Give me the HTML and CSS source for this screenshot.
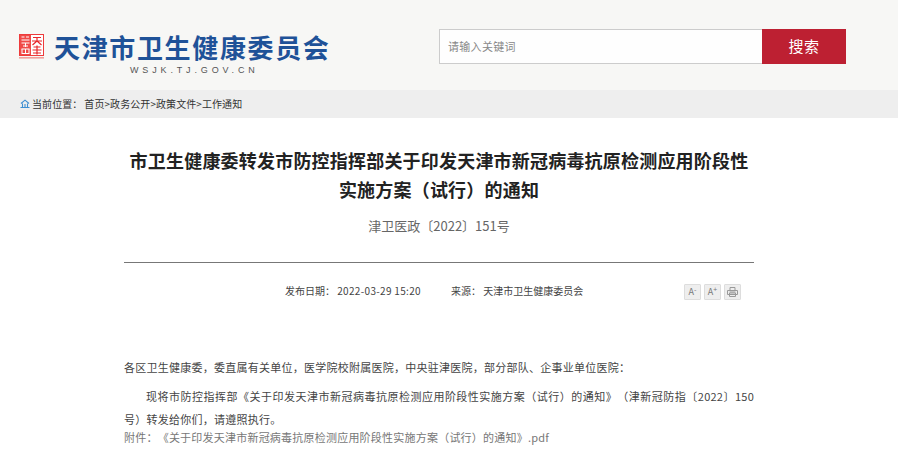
FILE: index.html
```html
<!DOCTYPE html>
<html lang="zh-CN">
<head>
<meta charset="utf-8">
<title>天津市卫生健康委员会</title>
<link rel="stylesheet" href="styles.css">
</head>
<body>
<header class="top">
  <div class="brand">
    <svg class="seal" width="25" height="25" viewBox="0 0 25 25" aria-hidden="true">
      <rect x="0.500" y="0.500" width="24" height="21" fill="#fff" stroke="#ee3b3b"/>
      <rect x="1" y="1" width="11" height="20" fill="#f04a48"/>
      <path d="M14 3.500h8M13 7h10M18 3.500v4M18 7l-4.500 4M18 7l4.500 4M14.500 13h7M13.500 16h9M14 19h8M18 11.500v9" stroke="#e8262a" stroke-width="1.200" fill="none"/>
      <path d="M2.500 3h3M7 3h3M2.500 6h8M2.500 9h8M4 12h5M6.500 9v4M2.500 15h8M3 15v5M10 15v5M6.500 15v5M3 19.500h7" stroke="#fff" stroke-width="1" fill="none"/>
      <rect x="0" y="23" width="25" height="1.600" fill="#f2a09c"/>
    </svg>
    <div class="brand-text">
      <div class="brand-name">天津市卫生健康委员会</div>
      <div class="brand-url">WSJK.TJ.GOV.CN</div>
    </div>
  </div>
  <form class="search">
    <div class="search-input">请输入关键词</div>
    <div class="search-btn">搜索</div>
  </form>
</header>
<nav class="crumb">
  <svg class="home" width="10" height="9" viewBox="0 0 10 9" aria-hidden="true">
    <path d="M1 4.500 5 1.200l4 3.300M2.500 4.500V8M5 5v3M7.500 4.500V8M0.500 8.500h9" stroke="#3f8fd2" stroke-width="1.100" fill="none"/>
  </svg>
  <span class="crumb-label">当前位置：</span>
  <span>首页&gt;政务公开&gt;政策文件&gt;工作通知</span>
</nav>
<main class="article">
  <h1 class="title">市卫生健康委转发市防控指挥部关于印发天津市新冠病毒抗原检测应用阶段性<br>实施方案（试行）的通知</h1>
  <p class="docno">津卫医政〔2022〕151号</p>
  <div class="meta">
    <span class="date">发布日期：&nbsp;<span class="stamp">2022-03-29 15:20</span></span>
    <span class="source">来源：&nbsp;天津市卫生健康委员会</span>
    <span class="tools">
      <span class="tool">A<sup>-</sup></span>
      <span class="tool">A<sup>+</sup></span>
      <span class="tool">
        <svg width="11" height="10" viewBox="0 0 11 10" aria-hidden="true">
          <path d="M3 3.500V.5h5v3M.5 3.500h10v4H.5zM2.500 6h6v3.500h-6zM2.500 5h6" stroke="#999" stroke-width="1" fill="none"/>
        </svg>
      </span>
    </span>
  </div>
  <p class="para first">各区卫生健康委，委直属有关单位，医学院校附属医院，中央驻津医院，部分部队、企事业单位医院：</p>
  <p class="para body">现将市防控指挥部《关于印发天津市新冠病毒抗原检测应用阶段性实施方案（试行）的通知》（津新冠防指〔2022〕150号）转发给你们，请遵照执行。</p>
  <p class="attach">附件：《关于印发天津市新冠病毒抗原检测应用阶段性实施方案（试行）的通知》.pdf</p>
</main>
</body>
</html>
```
FILE: styles.css
```css
* { box-sizing: border-box; }
html, body { margin: 0; padding: 0; }
body {
  height: 457px;
  overflow: hidden;
  background: #fff;
  color: #333;
  font-family: "Noto Sans CJK SC", "Liberation Sans", sans-serif;
  text-spacing-trim: space-all;
}
.top {
  height: 90px;
  background: #f7f7f5;
  display: flex;
  justify-content: space-between;
  padding: 29px 52px 0 19px;
}
.brand { display: flex; align-items: flex-start; gap: 10px; }
.seal { margin-top: 5px; }
.brand-text { width: 276px; }
.brand-name {
  font-size: 26px;
  line-height: 36px;
  font-weight: 700;
  color: #1f5298;
  letter-spacing: 1.65px;
  white-space: nowrap;
}
.brand-url {
  padding-left: 76px;
  font-family: "Liberation Sans", sans-serif;
  font-size: 9px;
  line-height: 11px;
  letter-spacing: 3.85px;
  color: #555;
  white-space: nowrap;
}
.search { display: flex; height: 35px; width: 407px; }
.search-input {
  width: 323px;
  border: 1px solid #ccc;
  border-right: 0;
  background: #fefefe;
  color: #888;
  font-size: 11px;
  letter-spacing: 0.3px;
  line-height: 33px;
  padding-left: 8px;
}
.search-btn {
  width: 84px;
  padding-bottom: 1px;
  background: #bd2032;
  color: #fff;
  font-size: 15px;
  letter-spacing: 0.5px;
  line-height: 33px;
  text-align: center;
}
.crumb {
  height: 28px;
  padding: 0 0 1px 20px;
  background: #eee;
  display: flex;
  align-items: center;
  font-size: 10px;
  letter-spacing: 0.07px;
  color: #333;
  white-space: nowrap;
}
.home { margin-right: 2px; }
.crumb-label { margin-right: 2px; }
.article { width: 630px; margin: 0 0 0 124px; }
.title {
  margin: 28px 0 0;
  font-size: 18px;
  line-height: 29px;
  font-weight: 700;
  color: #222;
  text-align: center;
  letter-spacing: 0.2px;
}
.docno {
  margin: 12px 0 0;
  padding-bottom: 26px;
  border-bottom: 1px solid #777;
  font-size: 13px;
  line-height: 20px;
  color: #666;
  text-align: center;
}
.meta {
  height: 21px;
  margin-top: 17px;
  display: flex;
  align-items: center;
  font-size: 10px;
  color: #444;
  white-space: nowrap;
  padding-left: 161px;
}
.stamp { letter-spacing: 0.32px; }
.date { width: 166px; }
.source { width: 233px; }
.tools { display: flex; gap: 3px; margin-top: 2px; }
.tool {
  width: 17px;
  height: 16px;
  background: #eee;
  border: 1px solid #ddd;
  border-radius: 1px;
  color: #777;
  font-size: 9px;
  line-height: 14px;
  display: flex;
  align-items: center;
  justify-content: center;
}
.tool sup { font-size: 7px; line-height: 7px; margin-bottom: 5px; }
.para {
  margin: 0;
  font-size: 11px;
  letter-spacing: 0.25px;
  line-height: 23px;
  color: #444;
  text-align: justify;
}
.first { margin-top: 55px; }
.body { margin-top: 6px; text-indent: 22px; }
.attach {
  margin: -4px 0 0;
  font-size: 11px;
  letter-spacing: 0.22px;
  line-height: 20px;
  color: #777;
}
```
